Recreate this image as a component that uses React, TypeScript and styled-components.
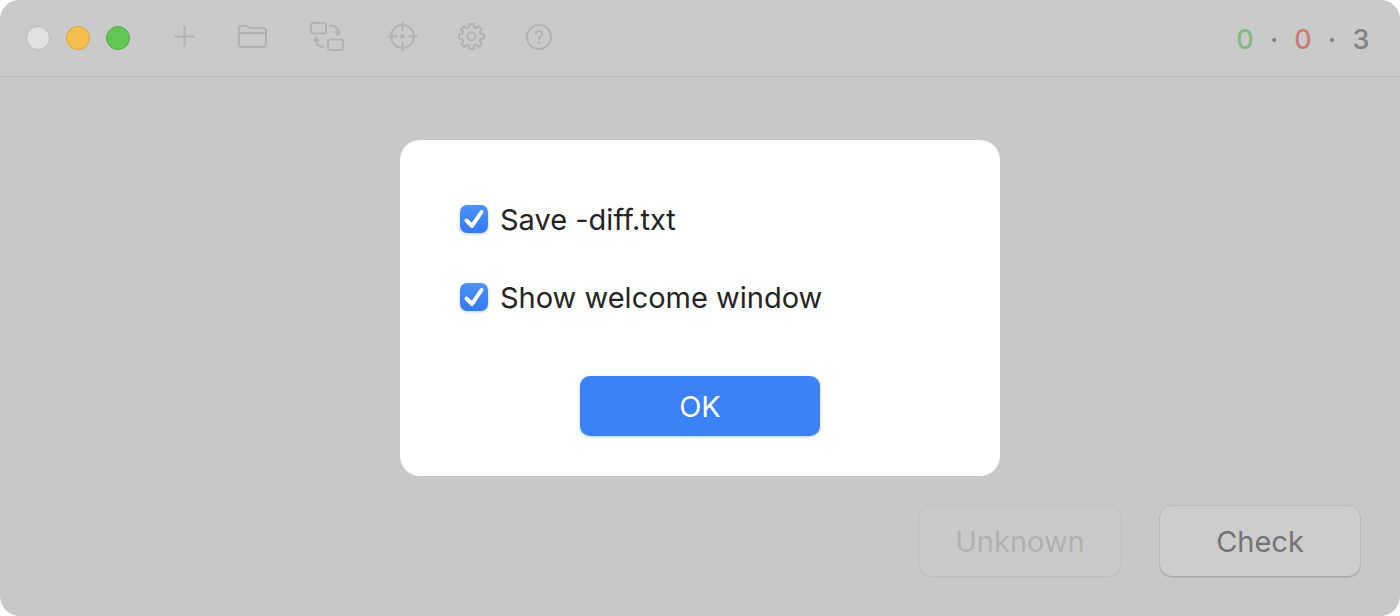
import React, { useState } from 'react';
import styled, { createGlobalStyle } from 'styled-components';

const GlobalStyle = createGlobalStyle`
  *, *::before, *::after { box-sizing: border-box; }
  body {
    margin: 0;
    background: #fff;
    font-family: Inter, "Liberation Sans", sans-serif;
  }
`;

const Window = styled.div`
  display: flex;
  flex-direction: column;
  min-height: 100vh;
  border-radius: 20px;
  overflow: hidden;
  background: #c8c8c8;
`;

const Toolbar = styled.header`
  display: flex;
  align-items: center;
  height: 77px;
  padding: 0 30px 0 26px;
  background: #cacaca;
  border-bottom: 1px solid #b7b7b7;
`;

const Lights = styled.div`
  display: flex;
  gap: 16px;
  margin-right: 41px;
`;

const Light = styled.button<{ $fill: string; $edge: string }>`
  width: 24px;
  height: 24px;
  padding: 0;
  border: 1px solid ${(p) => p.$edge};
  border-radius: 50%;
  background: ${(p) => p.$fill};
`;

const Tools = styled.nav`
  display: flex;
  align-items: center;
  gap: 39px;
  padding-bottom: 4px;
`;

const ToolButton = styled.button`
  display: flex;
  padding: 0;
  border: 0;
  background: none;
  color: #b2b2b2;
`;

const Icon = styled.svg`
  display: block;
  fill: none;
  stroke: currentColor;
  stroke-width: 2;
  stroke-linecap: round;
  stroke-linejoin: round;
`;

const Score = styled.div`
  display: flex;
  align-items: center;
  gap: 18px;
  margin-left: auto;
  padding-top: 4px;
  font-size: 27px;
  font-weight: 500;
  line-height: 32px;
  color: #818181;
`;

const Count = styled.span<{ $color: string }>`
  width: 18px;
  text-align: center;
  color: ${(p) => p.$color};
`;

const Dot = styled.span`
  display: flex;
  justify-content: center;
  width: 4px;
`;

const Actions = styled.footer`
  display: flex;
  justify-content: flex-end;
  gap: 40px;
  margin-top: auto;
  padding: 40px;
`;

const ActionButton = styled.button`
  width: 200px;
  height: 70px;
  padding: 2px 0 0;
  border: 0;
  border-radius: 12px;
  background: #cdcdcd;
  box-shadow: 0 0 1px 1px rgba(0, 0, 0, 0.04), 0 1px 2px rgba(0, 0, 0, 0.2);
  font: 400 29px/36px Inter, "Liberation Sans", sans-serif;
  color: #737373;

  &:disabled {
    background: #cacaca;
    box-shadow: 0 0 1px 1px rgba(0, 0, 0, 0.02), 0 1px 2px rgba(0, 0, 0, 0.06);
    color: #b0b0b0;
  }
`;

const Overlay = styled.div`
  position: fixed;
  inset: 0;
  display: flex;
  align-items: center;
  justify-content: center;
`;

const Dialog = styled.form`
  display: flex;
  flex-direction: column;
  width: 600px;
  max-width: 100%;
  padding: 60px 60px 40px;
  border-radius: 20px;
  background: #fff;
`;

const Options = styled.div`
  display: flex;
  flex-direction: column;
  gap: 40px;
  margin-bottom: 60px;
`;

const Option = styled.label`
  display: flex;
  align-items: center;
  gap: 12px;
  height: 38px;
  font-size: 29px;
  line-height: 36px;
  color: #242424;
`;

const OptionText = styled.span`
  padding-top: 2px;
`;

const Check = styled.span`
  display: grid;
  width: 28px;
  height: 28px;

  > * { grid-area: 1 / 1; }
`;

const CheckInput = styled.input`
  appearance: none;
  width: 28px;
  height: 28px;
  margin: 0;
  border: 1px solid #c4c4c4;
  border-radius: 7px;
  background: #fff;

  &:checked {
    border: 0;
    background: linear-gradient(#4b91f7, #367af6);
    box-shadow: 0 1px 3px rgba(54, 122, 246, 0.35);
  }

  &:not(:checked) + svg { visibility: hidden; }
`;

const Tick = styled(Icon)`
  color: #fff;
  stroke-width: 4;
  pointer-events: none;
`;

const OkButton = styled.button`
  align-self: center;
  width: 240px;
  height: 60px;
  padding: 2px 0 0;
  border: 0;
  border-radius: 10px;
  background: #3b82f7;
  box-shadow: 0 1px 3px rgba(59, 130, 247, 0.35);
  font: 400 29px/36px Inter, "Liberation Sans", sans-serif;
  color: #fff;
`;

function gearPath(cx: number, cy: number) {
  const teeth = 8;
  const step = (2 * Math.PI) / teeth;
  const at = (angle: number, r: number) =>
    `${(cx + r * Math.cos(angle)).toFixed(2)} ${(cy + r * Math.sin(angle)).toFixed(2)}`;
  let d = '';
  for (let i = 0; i < teeth; i++) {
    const mid = i * step - Math.PI / 2;
    d += `${i === 0 ? 'M' : 'L'}${at(mid - 0.17, 12.7)}`;
    d += `L${at(mid + 0.17, 12.7)}L${at(mid + 0.23, 10.4)}`;
    d += `Q${at(mid + step / 2 - 0.1, 8.6)} ${at(mid + step / 2, 9.7)}`;
    d += `Q${at(mid + step / 2 + 0.1, 8.6)} ${at(mid + step - 0.23, 10.4)}`;
  }
  return `${d}Z`;
}

interface OptionRowProps {
  label: string;
  checked: boolean;
  onChange: (value: boolean) => void;
}

function OptionRow({ label, checked, onChange }: OptionRowProps) {
  return (
    <Option>
      <Check>
        <CheckInput type="checkbox" checked={checked} onChange={(e) => onChange(e.target.checked)} />
        <Tick width="28" height="28" viewBox="0 0 28 28" aria-hidden="true">
          <path d="M6.5 15.5 12 21 21.5 7" />
        </Tick>
      </Check>
      <OptionText>{label}</OptionText>
    </Option>
  );
}

export default function App() {
  const [saveDiff, setSaveDiff] = useState(true);
  const [showWelcome, setShowWelcome] = useState(true);

  return (
    <>
      <GlobalStyle />
      <Window>
        <Toolbar>
          <Lights>
            <Light $fill="#e1e1e1" $edge="#bfbfbf" aria-label="Close" />
            <Light $fill="#f5bf4f" $edge="#dfa23a" aria-label="Minimize" />
            <Light $fill="#61c654" $edge="#4fac41" aria-label="Zoom" />
          </Lights>
          <Tools>
            <ToolButton aria-label="Add">
              <Icon width="28" height="32" viewBox="0 0 28 32">
                <path d="M13.5 7v19M4 16.5h19" />
              </Icon>
            </ToolButton>
            <ToolButton aria-label="Open folder">
              <Icon width="30" height="32" viewBox="0 0 30 32">
                <path d="M1 8.5Q1 5.8 3.7 5.8H8Q9.3 5.8 10.2 6.8L11 7.5Q11.5 8 12.6 8H25Q28 8 28 11V24Q28 27 25 27H4Q1 27 1 24ZM1 13H28" />
              </Icon>
            </ToolButton>
            <ToolButton aria-label="Swap">
              <Icon width="40" height="32" viewBox="0 0 40 32">
                <rect x="4" y="3" width="15" height="10.5" rx="2.5" />
                <rect x="21" y="19.5" width="15" height="10.5" rx="2.5" />
                <path d="M23.5 5.5C28 5.5 31 7 31 12M16.5 27C12.5 27 9.5 25.5 9.5 20.5" />
                <path d="M28.3 11.8h5.4l-2.7 3.7ZM6.8 20.7h5.4L9.5 17Z" fill="currentColor" strokeWidth="1" />
              </Icon>
            </ToolButton>
            <ToolButton aria-label="Target">
              <Icon width="33" height="32" viewBox="0 0 33 32">
                <circle cx="16.5" cy="16.5" r="11.5" />
                <path d="M16.5 2.2v8.3M16.5 22.5v8.3M2.2 16.5h8.3M22.5 16.5h8.3" />
                <circle cx="16.5" cy="16.5" r="2.2" fill="currentColor" stroke="none" />
              </Icon>
            </ToolButton>
            <ToolButton aria-label="Settings">
              <Icon width="28" height="32" viewBox="0 0 28 32">
                <path d={gearPath(13.5, 16.5)} />
                <circle cx="13.5" cy="16.5" r="4" />
              </Icon>
            </ToolButton>
            <ToolButton aria-label="Help">
              <Icon width="28" height="32" viewBox="0 0 28 32">
                <circle cx="14" cy="17" r="12" />
                <path d="M10.7 14C10.7 12 12 11 14 11S17.4 12.2 17.4 13.8C17.4 16.3 14 16.3 14 18.9" />
                <circle cx="13.9" cy="22.3" r="1.4" fill="currentColor" stroke="none" />
              </Icon>
            </ToolButton>
          </Tools>
          <Score>
            <Count $color="#86b681">0</Count>
            <Dot>·</Dot>
            <Count $color="#c77b74">0</Count>
            <Dot>·</Dot>
            <Count $color="#818181">3</Count>
          </Score>
        </Toolbar>
        <Actions>
          <ActionButton disabled>Unknown</ActionButton>
          <ActionButton>Check</ActionButton>
        </Actions>
      </Window>
      <Overlay>
        <Dialog role="dialog" aria-label="Settings" onSubmit={(e) => e.preventDefault()}>
          <Options>
            <OptionRow label="Save -diff.txt" checked={saveDiff} onChange={setSaveDiff} />
            <OptionRow label="Show welcome window" checked={showWelcome} onChange={setShowWelcome} />
          </Options>
          <OkButton type="submit">OK</OkButton>
        </Dialog>
      </Overlay>
    </>
  );
}
